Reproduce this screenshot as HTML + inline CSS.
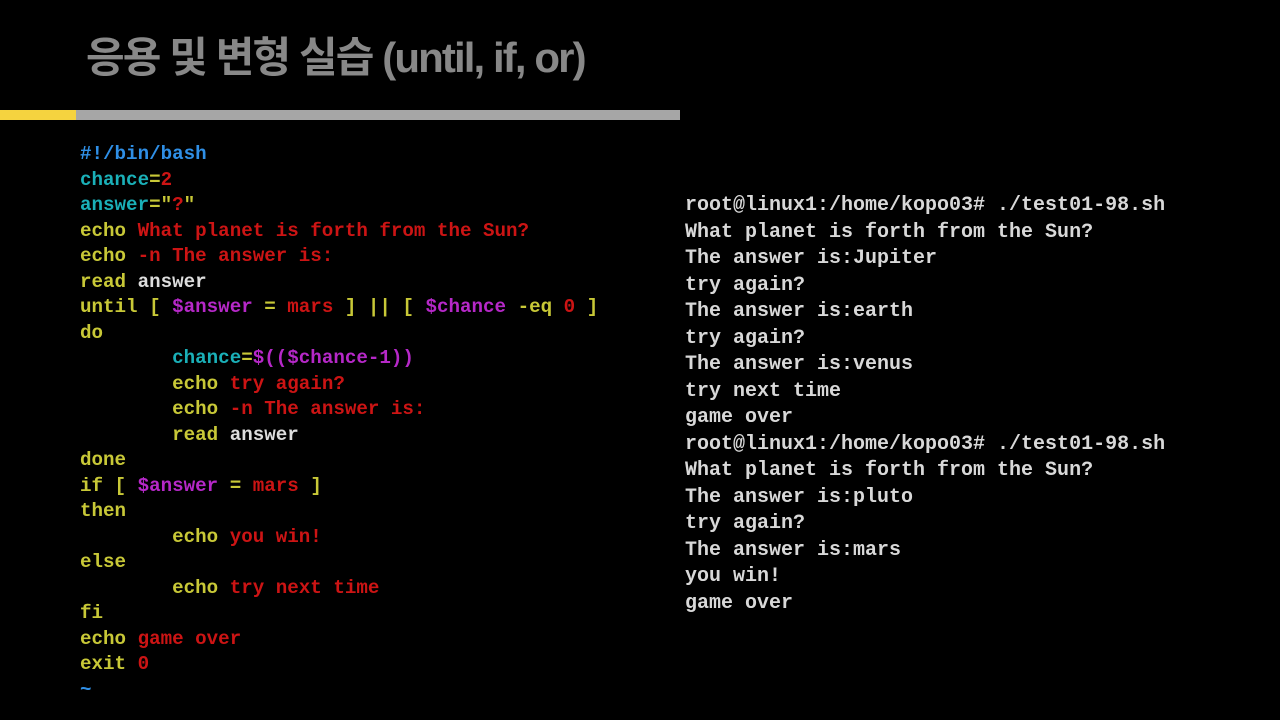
<!DOCTYPE html>
<html><head><meta charset="utf-8"><style>
body{margin:0;width:1280px;height:720px;background:#000;overflow:hidden;position:relative;font-family:"Liberation Sans","Noto Sans CJK KR",sans-serif}
.t{position:absolute;left:86px;top:24px;font-size:42px;font-weight:bold;color:#888;letter-spacing:-1.9px;white-space:nowrap}
.y{position:absolute;left:0;top:110px;width:76px;height:10px;background:#f5d33f}
.g{position:absolute;left:76px;top:110px;width:604px;height:10px;background:#a6a6a6}
pre{margin:0;position:absolute;font-family:"Liberation Mono",monospace;font-weight:bold}
.c{left:80px;top:142px;font-size:19.2px;line-height:25.5px;color:#ddd}
.o{left:685px;top:193px;font-size:20px;line-height:26.5px;color:#d8d8d8}
.Y{color:#c8c837}.C{color:#1ab0b8}.R{color:#cc1414}.M{color:#b628c8}.B{color:#2f8fe6}
</style></head><body>
<div class="t">응용 및 변형 실습 (until, if, or)</div>
<div class="y"></div><div class="g"></div>
<pre class="c"><span class="B">#!/bin/bash</span>
<span class="C">chance</span><span class="Y">=</span><span class="R">2</span>
<span class="C">answer</span><span class="Y">="</span><span class="R">?</span><span class="Y">"</span>
<span class="Y">echo</span> <span class="R">What planet is forth from the Sun?</span>
<span class="Y">echo</span> <span class="R">-n The answer is:</span>
<span class="Y">read</span> answer
<span class="Y">until [</span> <span class="M">$answer</span> <span class="Y">=</span> <span class="R">mars</span> <span class="Y">] || [</span> <span class="M">$chance</span> <span class="Y">-eq</span> <span class="R">0</span> <span class="Y">]</span>
<span class="Y">do</span>
        <span class="C">chance</span><span class="Y">=</span><span class="M">$(($chance-1))</span>
        <span class="Y">echo</span> <span class="R">try again?</span>
        <span class="Y">echo</span> <span class="R">-n The answer is:</span>
        <span class="Y">read</span> answer
<span class="Y">done</span>
<span class="Y">if [</span> <span class="M">$answer</span> <span class="Y">=</span> <span class="R">mars</span> <span class="Y">]</span>
<span class="Y">then</span>
        <span class="Y">echo</span> <span class="R">you win!</span>
<span class="Y">else</span>
        <span class="Y">echo</span> <span class="R">try next time</span>
<span class="Y">fi</span>
<span class="Y">echo</span> <span class="R">game over</span>
<span class="Y">exit</span> <span class="R">0</span>
<span class="B">~</span></pre>
<pre class="o">root@linux1:/home/kopo03# ./test01-98.sh
What planet is forth from the Sun?
The answer is:Jupiter
try again?
The answer is:earth
try again?
The answer is:venus
try next time
game over
root@linux1:/home/kopo03# ./test01-98.sh
What planet is forth from the Sun?
The answer is:pluto
try again?
The answer is:mars
you win!
game over</pre>
</body></html>
